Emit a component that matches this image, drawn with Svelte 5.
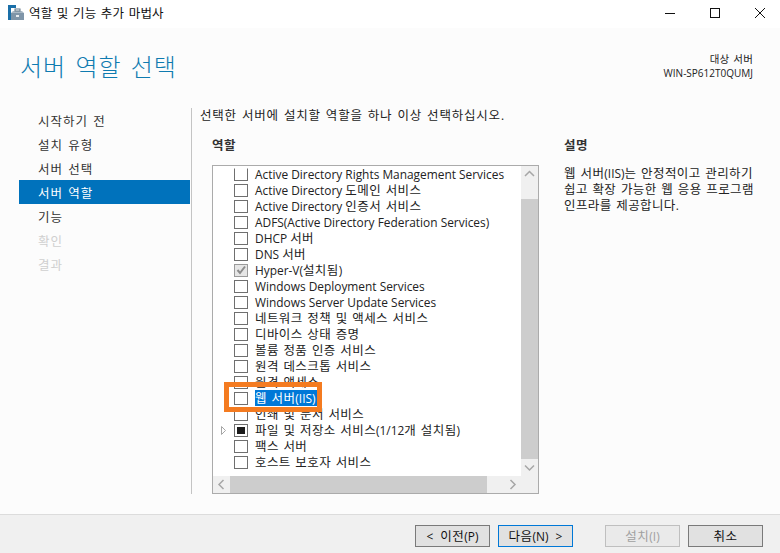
<script>
  const steps = [
    { t: '시작하기 전' }, { t: '설치 유형' }, { t: '서버 선택' },
    { t: '서버 역할', active: true }, { t: '기능' },
    { t: '확인', off: true }, { t: '결과', off: true }
  ];
  const roles = [
    { t: 'Active Directory Rights Management Services', clip: true },
    { t: 'Active Directory 도메인 서비스' },
    { t: 'Active Directory 인증서 서비스' },
    { t: 'ADFS(Active Directory Federation Services)' },
    { t: 'DHCP 서버' },
    { t: 'DNS 서버' },
    { t: 'Hyper-V(설치됨)', checked: true },
    { t: 'Windows Deployment Services' },
    { t: 'Windows Server Update Services' },
    { t: '네트워크 정책 및 액세스 서비스' },
    { t: '디바이스 상태 증명' },
    { t: '볼륨 정품 인증 서비스' },
    { t: '원격 데스크톱 서비스' },
    { t: '원격 액세스' },
    { t: '웹 서버(IIS)', sel: true },
    { t: '인쇄 및 문서 서비스' },
    { t: '파일 및 저장소 서비스(1/12개 설치됨)', partial: true, tree: true },
    { t: '팩스 서버' },
    { t: '호스트 보호자 서비스' }
  ];
  const runs = (s) => s.split(/([\uAC00-\uD7A3]+(?: +[\uAC00-\uD7A3]+)*)/).filter(Boolean)
    .map((p) => ({ p, ko: /[\uAC00-\uD7A3]/.test(p) }));
</script>

{#snippet txt(s)}{#each runs(s) as r}{#if r.ko}<span class="ko">{r.p}</span>{:else}{r.p}{/if}{/each}{/snippet}

<div class="win">
  <header class="titlebar">
    <svg class="appicon" width="16" height="16" viewBox="0 0 16 16">
      <rect x="0" y="0" width="3" height="15" fill="#1a6fa8" />
      <rect x="3" y="0" width="5" height="3" fill="#1a6fa8" />
      <rect x="3" y="8" width="13" height="7" fill="#7f95a8" />
      <path d="M3 8 L5 6 H14 L16 8 Z" fill="#a9b8c4" />
      <rect x="7" y="4" width="5" height="2" fill="none" stroke="#5f7485" stroke-width="1" />
      <rect x="8" y="10" width="3" height="2" fill="#e8edf1" />
    </svg>
    <span class="wintitle">{@render txt('역할 및 기능 추가 마법사')}</span>
    <div class="controls">
      <svg width="12" height="12" viewBox="0 0 12 12"><path d="M1 6.5 H11" stroke="#111" fill="none" /></svg>
      <svg width="12" height="12" viewBox="0 0 12 12"><rect x="1.5" y="1.5" width="9" height="9" stroke="#111" fill="none" /></svg>
      <svg width="12" height="12" viewBox="0 0 12 12"><path d="M1 1 L11 11 M11 1 L1 11" stroke="#111" fill="none" /></svg>
    </div>
  </header>

  <div class="body">
    <div class="head">
      <h1>서버 역할 선택</h1>
      <div class="target">
        <div>{@render txt('대상 서버')}</div>
        <div>WIN-SP612T0QUMJ</div>
      </div>
    </div>

    <div class="columns">
      <nav class="steps">
        {#each steps as s}
          <div class="step" class:active={s.active} class:off={s.off}>{@render txt(s.t)}</div>
        {/each}
      </nav>

      <main class="main">
        <p class="intro">{@render txt('선택한 서버에 설치할 역할을 하나 이상 선택하십시오.')}</p>
        <div class="panes">
          <section class="rolepane">
            <h2>{@render txt('역할')}</h2>
            <div class="listbox">
              <div class="listrow">
                <div class="rows">
                  {#each roles as r}
                    <div class="row">
                      <span class="tree">
                        {#if r.tree}
                          <svg width="7" height="9" viewBox="0 0 7 9"><path d="M1.5 0.5 L5.5 4.5 L1.5 8.5 Z" fill="#fff" stroke="#a6a6a6" /></svg>
                        {/if}
                      </span>
                      <span class="box" class:clip={r.clip} class:checked={r.checked}>
                        {#if r.checked}
                          <svg width="12" height="12" viewBox="0 0 12 12"><path d="M2.5 6 L5 9 L10 2.5" stroke="#8c8c8c" stroke-width="2" fill="none" /></svg>
                        {/if}
                        {#if r.partial}<i class="fill"></i>{/if}
                      </span>
                      <span class="label" class:sel={r.sel}>{@render txt(r.t)}</span>
                    </div>
                  {/each}
                </div>
                <div class="vbar">
                  <svg class="arrow" width="17" height="17" viewBox="0 0 17 17"><path d="M4 10 L8.5 5.5 L13 10" stroke="#a6a6a6" stroke-width="1.5" fill="none" /></svg>
                  <div class="vthumb"></div>
                  <svg class="arrow" width="17" height="17" viewBox="0 0 17 17"><path d="M4 6.5 L8.5 11 L13 6.5" stroke="#a6a6a6" stroke-width="1.5" fill="none" /></svg>
                </div>
              </div>
              <div class="hbar">
                <svg class="arrow" width="17" height="17" viewBox="0 0 17 17"><path d="M10.5 4 L6 8.5 L10.5 13" stroke="#a6a6a6" stroke-width="1.5" fill="none" /></svg>
                <div class="hthumb"></div>
                <div class="hrest">
                  <svg class="arrow" width="17" height="17" viewBox="0 0 17 17"><path d="M6.5 4 L11 8.5 L6.5 13" stroke="#a6a6a6" stroke-width="1.5" fill="none" /></svg>
                </div>
              </div>
            </div>
            <div class="callout"></div>
          </section>
          <aside class="desc">
            <h2>{@render txt('설명')}</h2>
            <p>{@render txt('웹 서버(IIS)는 안정적이고 관리하기')}<br />{@render txt('쉽고 확장 가능한 웹 응용 프로그램')}<br />{@render txt('인프라를 제공합니다.')}</p>
          </aside>
        </div>
      </main>
    </div>
  </div>

  <footer class="footer">
    <button><span class="lt">&lt;</span>{@render txt('이전(P)')}</button>
    <button class="primary">{@render txt('다음(N)')}<span class="gt">&gt;</span></button>
    <button class="disabled spaced">{@render txt('설치(I)')}</button>
    <button>{@render txt('취소')}</button>
  </footer>
</div>

<style>
  :global(body) { margin: 0; }
  .ko { font-size: 12.5px; letter-spacing: 0.5px; word-spacing: 1px; line-height: 0; }
  .win {
    width: 780px; height: 553px; display: flex; flex-direction: column; overflow: hidden;
    font-family: "Open Sans", "Noto Sans CJK KR", sans-serif;
    font-size: 11.9px; color: #222; background: #fcfcfc;
  }
  .titlebar {
    height: 28px; flex: none; background: #fff; display: flex; align-items: center;
    padding-left: 8px; box-sizing: border-box;
  }
  .appicon { flex: none; margin-top: -2px; }
  .wintitle { margin-left: 5px; color: #111; margin-top: -2px; }
  .wintitle .ko { letter-spacing: 0.2px; }
  .controls {
    margin-left: auto; display: flex; gap: 33px; padding-right: 14px; margin-top: -2px;
  }
  .body { flex: 1; min-height: 0; display: flex; flex-direction: column; }
  .head { height: 80px; flex: none; display: flex; justify-content: space-between; padding: 0 27px 0 20px; }
  h1 {
    margin: 20px 0 0; font-size: 24px; font-weight: 300; line-height: 38px; color: #0f7bb0;
    letter-spacing: 1px; word-spacing: 2px;
  }
  .target { text-align: right; font-size: 10px; line-height: 14px; padding-top: 24px; color: #222; }
  .target .ko { font-size: 10.5px; letter-spacing: 0.2px; }
  .columns { display: flex; flex: 1; min-height: 0; }
  .steps {
    width: 171px; margin-left: 19px; flex: none; height: 386px;
    margin-right: 1px; box-sizing: border-box;
  }
  .step { height: 24px; line-height: 26px; padding-left: 19px; color: #333; }
  .step .ko { letter-spacing: 1px; }
  .step.active { background: #0072bc; color: #fff; }
  .step.off { color: #cfcfcf; }
  .main {
    flex: 1; border-left: 1px solid #c4c4c4; height: 386px; box-sizing: border-box;
    padding-left: 8px;
  }
  .intro { margin: -1px 0 0; line-height: 16px; }
  .intro .ko { letter-spacing: 0.8px; }
  .panes { display: flex; margin-top: 15px; }
  .rolepane { position: relative; width: 327px; margin-left: 12px; flex: none; }
  h2 { margin: 0; font-size: 11.5px; font-weight: 600; line-height: 16px; color: #333; }
  .listbox {
    margin-top: 11px; height: 329px; box-sizing: border-box; border: 1px solid #ababab;
    background: #fff; display: flex; flex-direction: column;
  }
  .listrow { flex: 1; min-height: 0; display: flex; }
  .rows { flex: 1; min-width: 0; overflow: hidden; }
  .row { height: 16px; display: flex; align-items: center; white-space: nowrap; }
  .tree { width: 21px; flex: none; display: flex; justify-content: flex-end; padding: 0 7px; box-sizing: border-box; }
  .box {
    width: 14px; height: 13px; flex: none; box-sizing: border-box; border: 1px solid #6f6f6f;
    background: #fff; display: flex; align-items: center; justify-content: center;
  }
  .box.clip { border-top-color: transparent; }
  .box.checked { border-color: #9a9a9a; background: #e6e6e6; }
  .box svg { flex: none; }
  .fill { display: block; width: 8px; height: 7px; background: #1c1c1c; }
  .label { margin-left: 7px; color: #222; line-height: 16px; }
  .label .ko { letter-spacing: 0.4px; }
  .label.sel { background: #0078d7; color: #fff; padding-right: 1px; }
  .vbar { width: 17px; flex: none; background: #f0f0f0; display: flex; flex-direction: column; }
  .arrow { display: block; flex: none; }
  .vthumb { flex: 1; background: #cdcdcd; margin-top: 16px; }
  .hbar { height: 17px; flex: none; background: #f0f0f0; display: flex; }
  .hthumb { width: 257px; background: #cdcdcd; flex: none; }
  .hrest { flex: 1; display: flex; justify-content: flex-end; padding-right: 17px; }
  .callout {
    position: absolute; left: 12px; top: 244px; width: 98px; height: 30px; box-sizing: border-box;
    border: 5px solid #f47b20; pointer-events: none;
  }
  .desc { margin-left: 25px; flex: 1; }
  .desc p { margin: 11px 0 0; line-height: 16px; color: #222; }
  .desc .ko { letter-spacing: 0.4px; }
  .footer {
    height: 39px; flex: none; box-sizing: border-box; border-top: 1px solid #dcdcdc; background: #f0f0f0;
    display: flex; align-items: flex-start; padding: 10px 17px 0 415px; gap: 8px;
  }
  button {
    width: 75px; height: 22px; box-sizing: border-box; border: 1px solid #7a7a7a; background: #e1e1e1;
    font: inherit; color: #111; padding: 0; line-height: 18px;
  }
  .lt { margin-right: 7px; }
  .gt { margin-left: 7px; }
  button.primary { border-color: #0078d7; }
  button.disabled { border-color: #bfbfbf; background: #eaeaea; color: #a0a0a0; }
  button.spaced { margin-left: 24px; }
</style>
